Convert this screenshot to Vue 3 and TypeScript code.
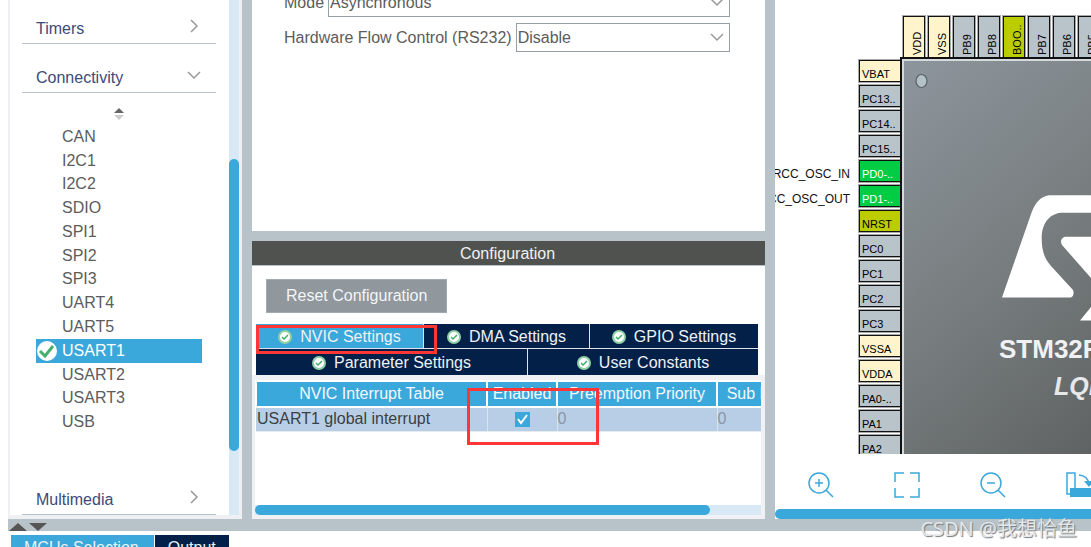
<script setup lang="ts">
import { ref } from 'vue'

interface Pin {
  name: string
  kind: 'power' | 'io' | 'boot' | 'used'
}

const peripherals: string[] = [
  'CAN', 'I2C1', 'I2C2', 'SDIO', 'SPI1', 'SPI2', 'SPI3',
  'UART4', 'UART5', 'USART1', 'USART2', 'USART3', 'USB',
]
const selected = ref('USART1')

const mode = ref('Asynchronous')
const flow = ref('Disable')
const irqEnabled = ref(true)

const tabRows: string[][] = [
  ['NVIC Settings', 'DMA Settings', 'GPIO Settings'],
  ['Parameter Settings', 'User Constants'],
]
const activeTab = ref('NVIC Settings')

const topPins: Pin[] = [
  { name: 'VDD', kind: 'power' },
  { name: 'VSS', kind: 'power' },
  { name: 'PB9', kind: 'io' },
  { name: 'PB8', kind: 'io' },
  { name: 'BOO..', kind: 'boot' },
  { name: 'PB7', kind: 'io' },
  { name: 'PB6', kind: 'io' },
  { name: 'PB5', kind: 'io' },
]
const leftPins: Pin[] = [
  { name: 'VBAT', kind: 'power' },
  { name: 'PC13..', kind: 'io' },
  { name: 'PC14..', kind: 'io' },
  { name: 'PC15..', kind: 'io' },
  { name: 'PD0-..', kind: 'used' },
  { name: 'PD1-..', kind: 'used' },
  { name: 'NRST', kind: 'boot' },
  { name: 'PC0', kind: 'io' },
  { name: 'PC1', kind: 'io' },
  { name: 'PC2', kind: 'io' },
  { name: 'PC3', kind: 'io' },
  { name: 'VSSA', kind: 'power' },
  { name: 'VDDA', kind: 'power' },
  { name: 'PA0-..', kind: 'io' },
  { name: 'PA1', kind: 'io' },
  { name: 'PA2', kind: 'io' },
]
</script>

<template>
  <div class="app">
    <main class="workspace">
      <aside class="sidebar">
        <nav class="categories" aria-label="Categories">
          <button class="category first" type="button">
            <span>Timers</span>
            <svg class="chev" viewBox="0 0 14 14"><path d="M4 1l6 6-6 6" /></svg>
          </button>
          <button class="category" type="button">
            <span>Connectivity</span>
            <svg class="chev" viewBox="0 0 14 14"><path d="M1 4l6 6 6-6" /></svg>
          </button>
          <button class="sort" type="button" aria-label="Sort">
            <svg width="10" height="14" viewBox="0 0 10 14">
              <path d="M0 6L5 1l5 5z" fill="#666" />
              <path d="M0 8h10l-5 5z" fill="#ccc" />
            </svg>
          </button>
          <ul class="peripherals">
            <li v-for="p in peripherals" :key="p">
              <button
                class="peripheral"
                :class="{ current: p === selected }"
                type="button"
                @click="selected = p"
              >
                <span class="mark">
                  <svg v-if="p === selected" width="20" height="20" viewBox="0 0 20 20">
                    <circle cx="10" cy="10" r="10" fill="#fff" />
                    <path d="M3 10l5 5 8-10" fill="none" stroke="#45b06e" stroke-width="3" />
                  </svg>
                </span>
                <span>{{ p }}</span>
              </button>
            </li>
          </ul>
          <button class="category last" type="button">
            <span>Multimedia</span>
            <svg class="chev" viewBox="0 0 14 14"><path d="M4 1l6 6-6 6" /></svg>
          </button>
        </nav>
        <div class="vscroll"><div class="vthumb"></div></div>
      </aside>

      <section class="center">
        <div class="mode-panel">
          <div class="field">
            <label for="mode">Mode</label>
            <span class="select-box">
              <select id="mode" v-model="mode">
                <option>Asynchronous</option>
              </select>
              <svg class="chev" viewBox="0 0 14 14"><path d="M1 4l6 6 6-6" /></svg>
            </span>
          </div>
          <div class="field">
            <label for="flow">Hardware Flow Control (RS232)</label>
            <span class="select-box">
              <select id="flow" v-model="flow">
                <option>Disable</option>
              </select>
              <svg class="chev" viewBox="0 0 14 14"><path d="M1 4l6 6 6-6" /></svg>
            </span>
          </div>
        </div>

        <div class="config-panel">
          <h2 class="config-title">Configuration</h2>
          <div class="config-top">
            <button class="reset" type="button">Reset Configuration</button>
            <div class="tabs">
              <div v-for="(row, i) in tabRows" :key="i" class="tab-row" :class="'row' + i">
                <button
                  v-for="t in row"
                  :key="t"
                  class="tab"
                  :class="{ active: t === activeTab }"
                  type="button"
                  @click="activeTab = t"
                >
                  <svg width="14" height="14" viewBox="0 0 14 14">
                    <circle cx="7" cy="7" r="6" fill="#fff" stroke="#8fd0a6" stroke-width="2" />
                    <path d="M4 7l2 2 4-4" fill="none" stroke="#3fae6b" stroke-width="1.5" />
                  </svg>
                  <span>{{ t }}</span>
                </button>
              </div>
              <div class="callout callout-tab"></div>
            </div>
          </div>

          <div class="table-area">
            <div class="table-clip">
              <table>
                <colgroup>
                  <col class="c1" /><col class="c2" /><col class="c3" /><col class="c4" />
                </colgroup>
                <thead>
                  <tr>
                    <th>NVIC Interrupt Table</th>
                    <th>Enabled</th>
                    <th>Preemption Priority</th>
                    <th>Sub Priority</th>
                  </tr>
                </thead>
                <tbody>
                  <tr>
                    <td class="irq"><label for="irq">USART1 global interrupt</label></td>
                    <td>
                      <span class="check">
                        <input id="irq" v-model="irqEnabled" type="checkbox" />
                        <svg v-if="irqEnabled" width="15" height="15" viewBox="0 0 15 15">
                          <path d="M3 7l3 4 6-8" fill="none" stroke="#fff" stroke-width="2" />
                        </svg>
                      </span>
                    </td>
                    <td class="num">0</td>
                    <td class="num">0</td>
                  </tr>
                </tbody>
              </table>
            </div>
            <div class="hscroll"><div class="hthumb"></div></div>
            <div class="callout callout-check"></div>
          </div>
        </div>
      </section>

      <section class="pinout">
        <svg class="canvas" role="img" aria-label="Pinout view">
          <defs>
            <linearGradient id="body" gradientUnits="userSpaceOnUse" x1="128" y1="60" x2="448" y2="430">
              <stop offset="0" stop-color="#8d969d" />
              <stop offset="0.45" stop-color="#787d7f" />
              <stop offset="1" stop-color="#565a59" />
            </linearGradient>
          </defs>
          <g v-for="(p, i) in topPins" :key="p.name">
            <rect class="halo" :x="127 + i * 25" y="15" width="24" height="45" />
            <rect class="pin" :class="p.kind" :x="128.5 + i * 25" y="16.5" width="21" height="44" />
            <text class="pin-text" :transform="`translate(${146 + i * 25} 55) rotate(-90)`">{{ p.name }}</text>
          </g>
          <g v-for="(p, i) in leftPins" :key="p.name">
            <rect class="halo" x="83" :y="59 + i * 25" width="45" height="24" />
            <rect class="pin" :class="p.kind" x="84.5" :y="60.5 + i * 25" width="43" height="21" />
            <text class="pin-text" :class="{ light: p.kind === 'used' }" x="87" :y="78 + i * 25">{{ p.name }}</text>
          </g>
          <text class="signal" x="75" y="178">RCC_OSC_IN</text>
          <text class="signal" x="75" y="203">RCC_OSC_OUT</text>
          <rect x="125" y="57" width="900" height="900" fill="#111" />
          <rect x="127" y="59" width="900" height="900" fill="#d5dadd" />
          <rect x="129" y="61" width="900" height="900" fill="url(#body)" />
          <ellipse cx="146.5" cy="81" rx="5.5" ry="6.5" fill="#b5c1c8" stroke="#586165" stroke-width="1.2" />
          <g fill="#fff">
            <path d="M227 297.5L255 217Q261 197 274 195.3H400V212.7H286C273 214 266.7 225 266.7 238C266.7 250 269 258 276 266L298 290Q300 295 296 297.5Z" />
            <path d="M400 236.7H290Q284 239 287 245L330 294V236Z" />
            <path d="M305 320.5L316 307L340 280V320.5Z" />
          </g>
          <text class="chip-name" x="224" y="358">STM32F103RCTx</text>
          <text class="chip-package" x="279" y="395">LQFP64</text>
        </svg>
        <div class="tools">
          <button type="button" aria-label="Zoom in">
            <svg viewBox="0 0 26 26">
              <circle cx="11" cy="11" r="10" /><path d="M18 18l7 7M7 11h8M11 7v8" />
            </svg>
          </button>
          <button type="button" aria-label="Fit to window">
            <svg viewBox="0 0 26 26"><path d="M10 1H1v9M16 1h9v9M25 16v9h-9M10 25H1v-9" /></svg>
          </button>
          <button type="button" aria-label="Zoom out">
            <svg viewBox="0 0 26 26">
              <circle cx="11" cy="11" r="10" /><path d="M18 18l7 7M7 11h8" />
            </svg>
          </button>
          <button type="button" aria-label="Rotate">
            <svg viewBox="0 0 26 26">
              <path d="M4 22H1V1h8v15" /><path d="M13 3q9 1 10 9" />
              <path d="M18 9l5 6 5-6z" fill="#3ba8dc" stroke="none" />
              <path d="M4 16h22v9H4z" fill="#3ba8dc" stroke="none" />
            </svg>
          </button>
        </div>
        <div class="pinout-scroll"></div>
      </section>
    </main>

    <div class="splitter">
      <svg width="40" height="8" viewBox="0 0 40 8">
        <path d="M0 8L9 0l9 8zM20 0h18l-9 8z" fill="#555" />
      </svg>
    </div>

    <footer class="bottom-tabs">
      <button class="bottom-tab on" type="button">MCUs Selection</button>
      <button class="bottom-tab" type="button">Output</button>
    </footer>

    <div class="watermark">CSDN @我想恰鱼</div>
  </div>
</template>

<style>
body {
  background: #fff;
}
</style>

<style scoped>
.app,
.app * {
  box-sizing: border-box;
}
.app {
  position: relative;
  display: flex;
  flex-direction: column;
  height: 100vh;
  overflow: hidden;
  background: #fff;
  color: #5c5c5c;
  font: 16px/20px "Liberation Sans", Arial, sans-serif;
}
button,
select {
  margin: 0;
  padding: 0;
  border: 0;
  border-radius: 0;
  background: none;
  color: inherit;
  font: inherit;
  text-align: left;
}
.workspace {
  flex: 1;
  min-height: 0;
  display: grid;
  grid-template-columns: 234px minmax(0, 513fr) minmax(0, 316fr);
  gap: 10px;
  margin-left: 8px;
  background: #b8c3c9;
}
.chev {
  width: 14px;
  height: 14px;
  fill: none;
  stroke: #999;
  stroke-width: 1.5;
}

/* Sidebar */
.sidebar {
  display: flex;
  min-height: 0;
  overflow: hidden;
  background: #fff;
  border: solid #eef0f3;
  border-width: 0 3px 4px 2px;
}
.categories {
  flex: 1;
  display: flex;
  flex-direction: column;
  padding: 0 13px 0 12px;
}
.category {
  flex: none;
  display: flex;
  justify-content: space-between;
  align-items: flex-end;
  height: 49px;
  padding: 0 15px 4px 14px;
  border-bottom: 1px solid #b3c1c9;
  color: #3d4a7a;
}
.category .chev {
  margin-bottom: 6px;
}
.category.first {
  margin-top: -5px;
}
.category.last {
  margin-top: auto;
}
.sort {
  align-self: center;
  height: 14px;
  margin: 14px 0 4px;
  line-height: 0;
}
.peripherals {
  display: grid;
  grid-auto-rows: 1fr;
  height: 309px;
  margin: 0 14px;
  padding: 0;
  list-style: none;
}
.peripherals li {
  display: flex;
}
.peripheral {
  flex: 1;
  display: flex;
  align-items: center;
}
.mark {
  width: 26px;
  height: 20px;
  padding-left: 1px;
}
.peripheral.current {
  background: #3ba8dc;
  color: #fff;
}
.vscroll {
  width: 10px;
  padding-top: 159px;
  background: #d9e8f5;
}
.vthumb {
  height: 292px;
  border-radius: 5px;
  background: #3ba8dc;
}

/* Center column */
.center {
  display: flex;
  flex-direction: column;
  gap: 10px;
  min-height: 0;
}
.mode-panel {
  flex: none;
  height: 231px;
  overflow: hidden;
  padding: 0 35px 0 32px;
  background: #fff;
}
.field {
  display: flex;
  align-items: center;
  gap: 4px;
  margin-bottom: 6px;
}
.field:first-child {
  margin-top: -12px;
}
.select-box {
  flex: 1;
  position: relative;
}
.select-box select {
  display: block;
  width: 100%;
  height: 29px;
  padding-left: 1px;
  appearance: none;
  border: 1px solid #95a0a7;
  background: #fff;
}
.select-box .chev {
  position: absolute;
  right: 6px;
  top: 7px;
  pointer-events: none;
}
.config-panel {
  flex: 1;
  min-height: 0;
  display: flex;
  flex-direction: column;
  background: #fff;
}
.config-title {
  margin: 0;
  padding: 3px 2px 1px 0;
  border-bottom: 1px solid #b8c3c9;
  background: #505250;
  color: #f0f0f0;
  font-size: 16px;
  font-weight: 400;
  line-height: 20px;
  text-align: center;
}
.config-top {
  padding: 13px 7px 0 4px;
}
.reset {
  display: block;
  height: 34px;
  margin: 0 0 11px 10px;
  padding: 0 19px;
  border: 1px solid #a3aaaf;
  background: #90979d;
  color: #f4f5f6;
}
.tabs {
  position: relative;
}
.tab-row {
  display: grid;
  gap: 1px;
  background: #dfe3ea;
}
.row0 {
  grid-template-columns: 167fr 165fr 168fr;
}
.row1 {
  grid-template-columns: 271fr 230fr;
  padding-top: 1px;
}
.tab {
  display: flex;
  justify-content: center;
  align-items: center;
  gap: 8px;
  padding: 2px 0 0;
  background: #032148;
  color: #eef1f5;
}
.tab.active {
  background: #3ba8dc;
}
.row0 .tab {
  height: 24px;
}
.row1 .tab {
  height: 26px;
}
.callout {
  position: absolute;
  border: 3px solid #ff3636;
  pointer-events: none;
}
.callout-tab {
  left: 0;
  top: 1px;
  width: 181px;
  height: 29px;
}
.callout-check {
  left: 212px;
  top: 8px;
  width: 132px;
  height: 57px;
}
.table-area {
  position: relative;
  flex: 1;
  min-height: 0;
  display: flex;
  flex-direction: column;
  border: solid #f0f1f4;
  border-width: 5px 4px 4px 3px;
}
.table-clip {
  flex: 1;
  min-height: 0;
  overflow: hidden;
  background: #fff;
}
table {
  width: 563px;
  table-layout: fixed;
  border-collapse: collapse;
}
.c1 { width: 231px; }
.c2 { width: 70px; }
.c3 { width: 160px; }
.c4 { width: 102px; }
th {
  height: 26px;
  padding: 0;
  border: 2px solid #fff;
  background: #3ba8dc;
  color: #f4f8fb;
  font-weight: 400;
  white-space: nowrap;
}
td {
  height: 24px;
  padding: 0;
  border-right: 1px solid #d9e3ee;
  border-bottom: 1px solid #e6ebf0;
  background: #b8cee6;
}
.irq {
  padding-left: 1px;
  color: #3c3f42;
}
.num {
  color: #8b97a1;
}
.check {
  position: relative;
  display: block;
  width: 15px;
  height: 15px;
  margin: 0 auto;
}
.check input {
  display: block;
  width: 15px;
  height: 15px;
  margin: 0;
  appearance: none;
  background: #3ba8dc;
}
.check svg {
  position: absolute;
  inset: 0;
  pointer-events: none;
}
.hscroll {
  height: 10px;
  background: #d9e8f5;
}
.hthumb {
  width: 90%;
  height: 10px;
  border-radius: 5px;
  background: #3ba8dc;
}

/* Pinout view */
.pinout {
  display: flex;
  flex-direction: column;
  min-height: 0;
  overflow: hidden;
  background: #fff;
}
.canvas {
  display: block;
  flex: 1;
  width: 100%;
  min-height: 0;
  overflow: hidden;
}
.halo { fill: #a9a9a9; }
.pin { stroke: #111; stroke-width: 1; }
.pin.io { fill: #b8c3ca; }
.pin.power { fill: #fff4cc; }
.pin.boot { fill: #bbcc00; }
.pin.used { fill: #00cc44; }
.pin-text {
  font-size: 11px;
  fill: #000;
}
.pin-text.light { fill: #fff; }
.signal {
  font-size: 12px;
  fill: #111;
  text-anchor: end;
}
.chip-name {
  font-size: 26px;
  font-weight: 700;
  fill: #f0f1f2;
}
.chip-package {
  font-size: 25px;
  font-weight: 700;
  font-style: italic;
  fill: #e6e8e9;
}
.tools {
  flex: none;
  display: flex;
  height: 55px;
  padding: 18px 0 0 33px;
}
.tools button {
  flex: none;
  width: 86px;
  height: 26px;
}
.tools svg {
  display: block;
  width: 26px;
  height: 26px;
  fill: none;
  stroke: #3ba8dc;
  stroke-width: 1.5;
}
.pinout-scroll {
  flex: none;
  height: 10px;
  border-radius: 5px 0 0 5px;
  background: #3ba8dc;
}

/* Bottom strip */
.splitter {
  flex: none;
  height: 12px;
  margin-left: 8px;
  padding: 4px 0 0 1px;
  background: #b8c3c9;
  line-height: 0;
}
.bottom-tabs {
  flex: none;
  display: flex;
  gap: 1px;
  height: 16px;
  padding: 4px 0 0 11px;
  overflow: hidden;
}
.bottom-tab {
  height: 26px;
  padding: 0 13px;
  background: #032148;
  color: #eef1f5;
}
.bottom-tab.on {
  padding: 0 15px 0 13px;
  background: #3ba8dc;
}
.watermark {
  position: absolute;
  right: 14px;
  bottom: 4px;
  color: #e4e7e9;
  font: 20px/28px "Noto Sans", "Noto Sans CJK SC", sans-serif;
  text-shadow: 1px 1px 1px #70777b;
  pointer-events: none;
}
</style>
